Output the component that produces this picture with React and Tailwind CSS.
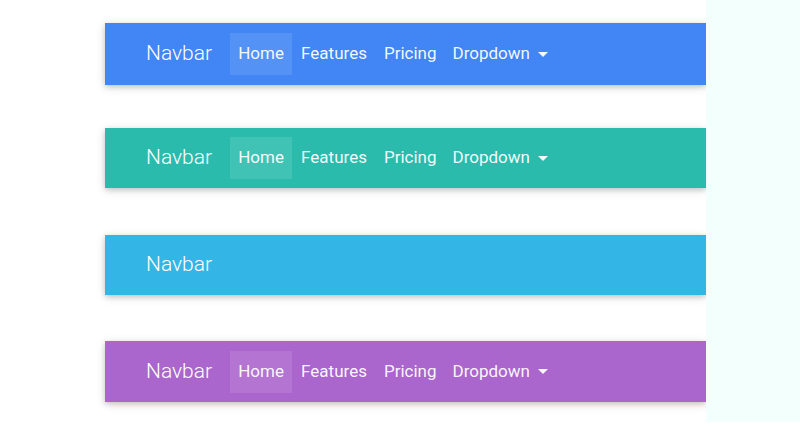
import React from 'react';

const bars = [
    { bg: 'bg-[#4285f4]', active: 'bg-[#5592f5]', h: 'h-[62px]', mt: 'mt-[23px]', links: true },
    { bg: 'bg-[#2bbbad]', active: 'bg-[#40c2b5]', h: 'h-[60px]', mt: 'mt-[43px]', links: true },
    { bg: 'bg-[#33b5e5]', active: 'bg-[#47bde8]', h: 'h-[60px]', mt: 'mt-[47px]', links: false },
    { bg: 'bg-[#aa66cc]', active: 'bg-[#b375d1]', h: 'h-[61px]', mt: 'mt-[46px]', links: true },
];

const Caret = () => (
    <svg width="10" height="6" viewBox="0 0 10 6" className="ml-[8px] mt-[1px]">
        <path d="M0 0 L10 0 L5 5 Z" fill="currentColor" />
    </svg>
);

const Navbar = ({ bar }) => {
    return (
        <nav
            className={`${bar.bg} ${bar.h} ${bar.mt} w-[601px] ml-[105px] flex items-center pl-[41px] text-white shadow-[0_2px_5px_0_rgba(0,0,0,0.16),0_2px_10px_0_rgba(0,0,0,0.12)]`}
        >
            <span className="text-[21px] font-light mr-[18px]">Navbar</span>
            {bar.links && (
                <ul className="flex items-center text-[17px] font-normal text-white/95">
                    <li className={`${bar.active} h-[42px] w-[62px] justify-center flex items-center`}>Home</li>
                    <li className="h-[42px] px-[9px] flex items-center">Features</li>
                    <li className="h-[42px] px-[8px] flex items-center">Pricing</li>
                    <li className="h-[42px] px-[8px] flex items-center">
                        Dropdown
                        <Caret />
                    </li>
                </ul>
            )}
        </nav>
    );
};

export default function App() {
    return (
        <div className="w-[800px] h-[426px] bg-white flex overflow-hidden" style={{ fontFamily: 'Roboto, sans-serif' }}>
            <div className="w-[706px] h-full flex flex-col">
                {bars.map((bar, i) => (
                    <Navbar key={i} bar={bar} />
                ))}
            </div>
            <div className="w-[94px] h-[422px] bg-[#f2fffd]" />
        </div>
    );
}
